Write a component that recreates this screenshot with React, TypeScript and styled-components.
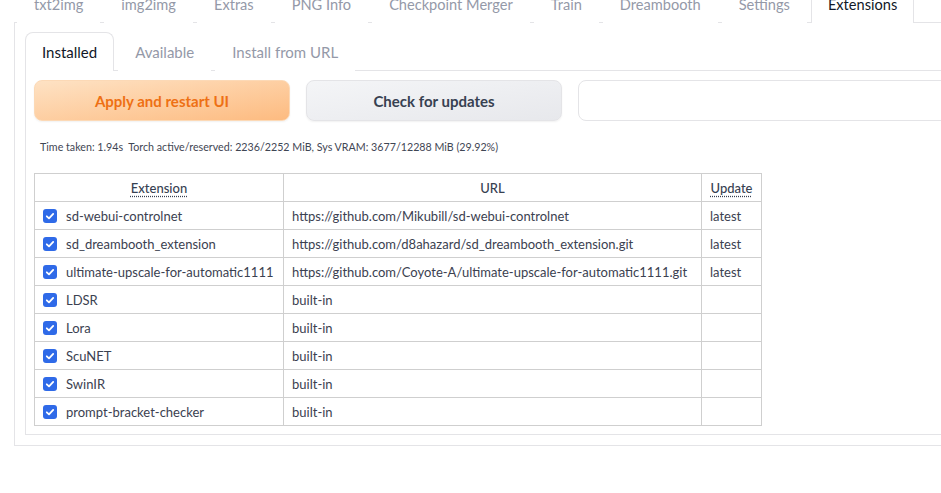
import React from 'react';
import styled, { createGlobalStyle } from 'styled-components';

const GlobalStyle = createGlobalStyle`
    html, body {
        margin: 0;
        padding: 0;
        background: #ffffff;
        overflow: hidden;
    }
    body {
        font-family: Lato, "Noto Sans", sans-serif;
        color: #374151;
    }
`

const Page = styled.div`
    width: 1100px;
    margin-top: -16px;
    padding-left: 14px;
`

const TabNav = styled.div<{ $inset?: number }>`
    display: flex;
    gap: 4px;
    padding-left: ${p => p.$inset || 0}px;
    border-bottom: 1px solid #e4e4e7;
`

const Tab = styled.div<{ $active?: boolean; $size: number }>`
    display: flex;
    align-items: center;
    height: 38px;
    padding: 0 16px;
    margin-bottom: -1px;
    box-sizing: content-box;
    font-size: ${p => p.$size}px;
    color: ${p => (p.$active ? '#111827' : '#9499a8')};
    background: #ffffff;
    border: 1px solid ${p => (p.$active ? '#e4e4e7' : 'transparent')};
    border-bottom: none;
    border-radius: 8px 8px 0 0;
    white-space: nowrap;
`

const Panel = styled.div<{ $pad: string }>`
    border: 1px solid #e4e4e7;
    border-top: none;
    padding: ${p => p.$pad};
`

const ButtonRow = styled.div`
    display: flex;
    gap: 16px;
    height: 41px;
`

const Button = styled.div<{ $primary?: boolean }>`
    flex: 0 0 256px;
    box-sizing: border-box;
    display: flex;
    align-items: center;
    justify-content: center;
    border-radius: 8px;
    font-size: 15px;
    font-weight: 700;
    color: ${p => (p.$primary ? '#ee7014' : '#374151')};
    background: ${p => p.$primary
        ? 'linear-gradient(to bottom right, #fee2c4, #fdbb80)'
        : 'linear-gradient(to bottom right, #f4f5f7, #e7e8ec)'};
    border: 1px solid ${p => (p.$primary ? '#fcd9b6' : '#e4e4e7')};
    box-shadow: 0 1px 2px rgba(0, 0, 0, 0.06);
`

const TextBox = styled.div`
    flex: 1;
    box-sizing: border-box;
    border: 1px solid #e4e4e7;
    border-radius: 8px;
    background: #ffffff;
`

const Status = styled.div`
    margin: 18px 0 18px 6px;
    font-size: 10.7px;
    line-height: 16px;
    color: #3f4654;
`

const Table = styled.table`
    width: 727px;
    table-layout: fixed;
    border-collapse: collapse;
    font-size: 13px;
    color: #3b4150;

    th, td {
        border: 1px solid #cfcfcf;
        height: 27px;
        padding: 0 8px;
        white-space: nowrap;
        overflow: hidden;
    }
`

const Col = styled.col<{ $width: number }>`
    width: ${p => p.$width}px;
`

const Head = styled.th`
    font-weight: 500;
    text-align: center;
    color: #374151;
`

const Abbr = styled.span`
    text-decoration: underline dotted;
    text-underline-offset: 3px;
`

const NameCell = styled.div`
    display: flex;
    align-items: center;
    gap: 9px;

    svg {
        flex-shrink: 0;
    }
`

const Check = () => (
    <svg width="14" height="14" viewBox="0 0 14 14">
        <rect width="14" height="14" rx="3" fill="#2f6ae8" />
        <path d="M3.8 7.3 L6 9.4 L10.2 4.9" fill="none" stroke="#fff" strokeWidth="1.8" strokeLinecap="round" strokeLinejoin="round" />
    </svg>
);

const topTabs = ['txt2img', 'img2img', 'Extras', 'PNG Info', 'Checkpoint Merger', 'Train', 'Dreambooth', 'Settings', 'Extensions'];

const extensions = [
    { name: 'sd-webui-controlnet', url: 'https://github.com/Mikubill/sd-webui-controlnet', update: 'latest' },
    { name: 'sd_dreambooth_extension', url: 'https://github.com/d8ahazard/sd_dreambooth_extension.git', update: 'latest' },
    { name: 'ultimate-upscale-for-automatic1111', url: 'https://github.com/Coyote-A/ultimate-upscale-for-automatic1111.git', update: 'latest' },
    { name: 'LDSR', url: 'built-in', update: '' },
    { name: 'Lora', url: 'built-in', update: '' },
    { name: 'ScuNET', url: 'built-in', update: '' },
    { name: 'SwinIR', url: 'built-in', update: '' },
    { name: 'prompt-bracket-checker', url: 'built-in', update: '' },
];

export default function App() {
    return (
        <Page>
            <GlobalStyle />
            <TabNav $inset={3}>
                {topTabs.map(t => (
                    <Tab key={t} $size={14.6} $active={t === 'Extensions'}>{t}</Tab>
                ))}
            </TabNav>
            <Panel $pad="9px 10px 10px 10px">
                <TabNav>
                    <Tab $size={15} $active>Installed</Tab>
                    <Tab $size={15}>Available</Tab>
                    <Tab $size={15}>Install from URL</Tab>
                </TabNav>
                <Panel $pad="9px 8px 8px 8px">
                    <ButtonRow>
                        <Button $primary>Apply and restart UI</Button>
                        <Button>Check for updates</Button>
                        <TextBox />
                    </ButtonRow>
                    <Status>Time taken: 1.94s&nbsp;&nbsp;Torch active/reserved: 2236/2252 MiB, Sys VRAM: 3677/12288 MiB (29.92%)</Status>
                    <Table>
                        <colgroup>
                            <Col $width={249} />
                            <Col $width={418} />
                            <Col $width={60} />
                        </colgroup>
                        <thead>
                            <tr>
                                <Head><Abbr>Extension</Abbr></Head>
                                <Head>URL</Head>
                                <Head><Abbr>Update</Abbr></Head>
                            </tr>
                        </thead>
                        <tbody>
                            {extensions.map(e => (
                                <tr key={e.name}>
                                    <td><NameCell><Check />{e.name}</NameCell></td>
                                    <td>{e.url}</td>
                                    <td>{e.update}</td>
                                </tr>
                            ))}
                        </tbody>
                    </Table>
                </Panel>
            </Panel>
        </Page>
    );
}
